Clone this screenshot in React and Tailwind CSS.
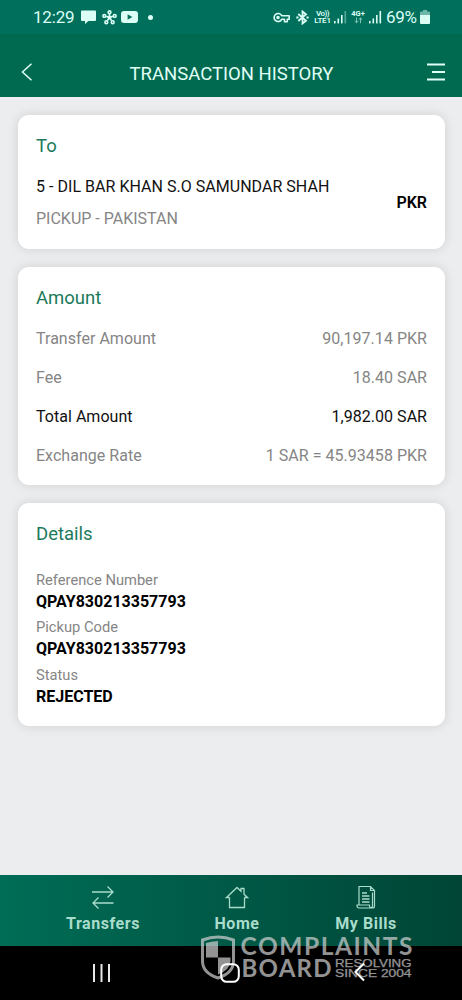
import React from "react";

const amountRows = [
  { label: "Transfer Amount", value: "90,197.14 PKR" },
  { label: "Fee", value: "18.40 SAR" },
  { label: "Total Amount", value: "1,982.00 SAR", strong: true },
  { label: "Exchange Rate", value: "1 SAR = 45.93458 PKR" },
];

const details = [
  { label: "Reference Number", value: "QPAY830213357793" },
  { label: "Pickup Code", value: "QPAY830213357793" },
  { label: "Status", value: "REJECTED" },
];

const SignalBars = ({ faded }) => (
  <svg width="13" height="14" viewBox="0 0 13 14" fill="currentColor">
    <rect x="0" y="11" width="1.6" height="2.4" />
    <rect x="3.5" y="8.5" width="1.6" height="4.9" />
    <rect x="7" y="5" width="1.6" height="8.4" />
    <rect x="10.5" y="1" width="1.6" height="12.4" opacity={faded ? 0.4 : 1} />
  </svg>
);

const StatusBar = () => (
  <div className="flex h-[34px] items-center justify-between bg-[#00705d] pl-[33px] pr-[32px] text-[#dcfff5]">
    <div className="flex items-center">
      <span className="w-[42px] whitespace-nowrap text-[17px] leading-none tracking-[-0.2px]">12:29</span>
      {/* Message */}
      <svg className="ml-[6px]" width="15" height="14" viewBox="0 0 15 14" fill="currentColor">
        <path d="M1 .5h13a1 1 0 0 1 1 1V10a1 1 0 0 1-1 1H7.5L4 14v-3H1a1 1 0 0 1-1-1V1.500a1 1 0 0 1 1-1z" />
      </svg>
      {/* Hub */}
      <svg className="ml-[6px]" width="15" height="15" viewBox="0 0 15 15" fill="none" stroke="currentColor" strokeWidth="1.6">
        <path d="M7.500 7.500V4M7.500 7.500 4 6.300M7.500 7.500 11 6.300M7.500 7.500 5.400 10.600M7.500 7.500 9.600 10.600" />
        <circle cx="7.500" cy="2.300" r="1.400" />
        <circle cx="2.300" cy="5.900" r="1.400" />
        <circle cx="12.700" cy="5.900" r="1.400" />
        <circle cx="4.300" cy="12.200" r="1.400" />
        <circle cx="10.700" cy="12.200" r="1.400" />
        <circle cx="7.500" cy="7.500" r="1.200" fill="currentColor" />
      </svg>
      {/* Video */}
      <svg className="ml-[4px]" width="17" height="12" viewBox="0 0 17 12">
        <rect width="17" height="12" rx="3" fill="currentColor" />
        <path d="M6.600 3.200v5.600L11.400 6z" fill="#00705d" />
      </svg>
      <span className="ml-[10px] size-[5px] rounded-full bg-current" />
    </div>
    <div className="flex items-center">
      {/* VPN key */}
      <svg width="17" height="11" viewBox="0 0 17 11" fill="none" stroke="currentColor" strokeWidth="1.600">
        <path d="M8.700 3.700A4 4 0 1 0 8.700 7.300H11.500V9.700H14.300V7.300H16.200V3.700z" strokeLinejoin="round" />
        <circle cx="5" cy="5.500" r="1" />
      </svg>
      {/* Bluetooth */}
      <svg className="ml-[6px]" width="13" height="15" viewBox="0 0 13 15" fill="none" stroke="currentColor" strokeWidth="1.800">
        <path d="M2.300 4 10 10.700 6.500 13.500V1.500L10 4.300 2.300 11" />
        <path d="M.3 7.500h2.200M10.500 7.500h2.200" strokeWidth="2" />
      </svg>
      <span className="ml-[5px] flex w-[17px] flex-col items-center whitespace-nowrap text-[8px] font-semibold leading-[7px]">
        <span className="tracking-[-0.5px]">Vo))</span>
        <span className="tracking-[-0.2px]">LTE1</span>
      </span>
      <span className="ml-[3px]">
        <SignalBars faded />
      </span>
      <span className="ml-[4px] flex w-[14px] flex-col items-center whitespace-nowrap text-[7.5px] font-bold leading-[7px]">
        <span>4G+</span>
        <svg width="9" height="7" viewBox="0 0 9 7" fill="none" stroke="currentColor" strokeWidth="1" opacity=".6">
          <path d="M2.500 .5v5M.7 4l1.800 1.800L4.300 4M6.500 6.200V1M4.700 2.700 6.500 1l1.800 1.700" />
        </svg>
      </span>
      <span className="ml-[4px]">
        <SignalBars />
      </span>
      <span className="ml-[4px] w-[32px] whitespace-nowrap text-[17px] leading-none tracking-[-0.3px]">69%</span>
      <svg className="ml-[2px]" width="10" height="14" viewBox="0 0 10 14" fill="currentColor">
        <path d="M3 0h4v1.500h2a1 1 0 0 1 1 1V5H0V2.500a1 1 0 0 1 1-1h2z" opacity=".5" />
        <path d="M0 5h10v8a1 1 0 0 1-1 1H1a1 1 0 0 1-1-1z" />
      </svg>
    </div>
  </div>
);

const Header = () => (
  <header className="flex h-[63px] items-center justify-between bg-[#006a51] pl-[21px] pr-[17px] pt-[12px] text-[#e0fff5]">
    <svg width="12" height="18" viewBox="0 0 12 18" fill="none" stroke="currentColor" strokeWidth="1.500">
      <path d="M10.500 .7 1.500 9l9 8.300" />
    </svg>
    <h1 className="ml-[3px] whitespace-nowrap pt-[4px] text-[18.5px] leading-6">TRANSACTION HISTORY</h1>
    <svg width="18" height="18" viewBox="0 0 18 18" fill="none" stroke="currentColor" strokeWidth="2">
      <path d="M0 1.500h18M5 9h13M0 16.500h18" />
    </svg>
  </header>
);

const Card = ({ className, title, children }) => (
  <section className={`rounded-[11px] bg-white px-[18px] shadow-[0_0_12px_rgba(0,0,0,0.12)] ${className}`}>
    <h2 className="pt-[19px] text-[18.5px] leading-6 text-[#1b7a5b]">{title}</h2>
    {children}
  </section>
);

const BottomNav = () => (
  <nav className="flex h-[71px] bg-linear-to-r from-[#006d56] to-[#004536] pl-[39px] pr-[33px] text-[16px] font-bold leading-5 tracking-[0.55px] text-[#a9dccb]">
    <div className="flex w-[128px] flex-col items-center pt-[10px]">
      <svg width="22" height="24" viewBox="0 0 22 24" fill="none" stroke="currentColor" strokeWidth="1.300">
        <path d="M0 7h21M15.500 1.500 21 7l-5.500 5.500M21.500 18H1M6.500 12.500 1 18l5.500 5.500" />
      </svg>
      <span className="mt-[5px]">Transfers</span>
    </div>
    <div className="flex w-[140px] flex-col items-center pt-[10px]">
      <svg width="24" height="24" viewBox="0 0 24 24" fill="none" stroke="currentColor" strokeWidth="1.300">
        <path d="M4.500 12.500V22.500H19.500V12.500M4.500 12.500H1.500L12 2.500l4 3.800V3.500h3v5.700l3.500 3.300H19.500" />
      </svg>
      <span className="mt-[5px]">Home</span>
    </div>
    <div className="flex w-[118px] flex-col items-center pt-[10px]">
      <svg width="20" height="24" viewBox="0 0 20 24" fill="none" stroke="currentColor" strokeWidth="1.200">
        <path d="M3 20V1.500h11.500l4 4V21a2 2 0 0 1-2 2H3a2 2 0 0 1-2-2v-1h12.500v1a1.500 1.500 0 0 0 3 0V7.500M14.500 1.500v4h4" />
        <path d="M6 8h5M6 11h7.500M6 14h7.500M6 17h7.500" strokeWidth="1.300" />
      </svg>
      <span className="mt-[5px]">My Bills</span>
    </div>
  </nav>
);

const Watermark = () => (
  <div className="absolute left-[200px] top-[-11px] font-[Lato,sans-serif] opacity-70">
    <svg
      className="overflow-visible"
      width="214"
      height="46"
      viewBox="0 0 214 46"
      fill="#d2d2d2"
    >
      <path
        d="M2.500 5Q18 -1 33.500 5V26Q33.500 38 18 43Q2.500 38 2.500 26z"
        fill="none"
        stroke="#d2d2d2"
        strokeWidth="3"
      />
      <path d="M6 8Q11 6.500 18 6V22.500H6zM18 22.500H30.500V26Q30 35 18 39.500z" />
      <text x="40.500" y="19.500" fontSize="24.500" fontWeight="700" textLength="172">COMPLAINTS</text>
      <text x="41.500" y="41.500" fontSize="24" fontWeight="700" textLength="90">BOARD</text>
      <g fontFamily="Liberation Sans, sans-serif" fontSize="10" stroke="#d2d2d2" strokeWidth=".25">
        <text x="135" y="32" textLength="76.500" lengthAdjust="spacingAndGlyphs">RESOLVING</text>
        <text x="135" y="42" textLength="76.500" lengthAdjust="spacingAndGlyphs">SINCE 2004</text>
      </g>
    </svg>
  </div>
);

const SystemNav = () => (
  <div className="relative flex h-[54px] bg-black pl-[92px] pt-[17px] text-white">
    <svg className="mt-px" width="19" height="18" viewBox="0 0 19 18" fill="none" stroke="#e8e8e8" strokeWidth="2">
      <path d="M2 0v18M9.500 0v18M17 0v18" />
    </svg>
    <svg className="z-10 ml-[109px]" width="20" height="20" viewBox="0 0 20 20" fill="none" stroke="currentColor" strokeWidth="2">
      <rect x="1.200" y="1.200" width="17.600" height="17.600" rx="5.500" />
    </svg>
    <svg className="z-10 ml-[114px] -mt-px" width="11" height="20" viewBox="0 0 11 20" fill="none" stroke="currentColor" strokeWidth="2">
      <path d="M10 1.500 1.500 10 10 18.500" />
    </svg>
    <Watermark />
  </div>
);

export default function App() {
  return (
    <div className="flex h-[1000px] w-[462px] flex-col overflow-hidden bg-[#ebedef] font-[Roboto,sans-serif]">
      <StatusBar />
      <Header />

      <main className="flex flex-1 flex-col gap-[18px] pl-[18px] pr-[17px] pt-[17.5px]">
        <Card title="To" className="h-[134px]">
          <div className="mt-[13px] flex items-center justify-between text-[16px]">
            <div>
              <p className="leading-[32px] tracking-[0.03px] text-[#111]">5 - DIL BAR KHAN S.O SAMUNDAR SHAH</p>
              <p className="leading-[32px] text-[#858585]">PICKUP - PAKISTAN</p>
            </div>
            <span className="font-semibold text-black">PKR</span>
          </div>
        </Card>

        <Card title="Amount" className="h-[218px]">
          <div className="mt-[9px] text-[16px] leading-[39px] tracking-[0.03px]">
            {amountRows.map((row) => (
              <div
                key={row.label}
                className={`flex justify-between ${row.strong ? "text-[#111]" : "text-[#858585]"}`}
              >
                <span>{row.label}</span>
                <span>{row.value}</span>
              </div>
            ))}
          </div>
        </Card>

        <Card title="Details" className="h-[223.5px]">
          <dl className="mt-[24px]">
            {details.map((item) => (
              <div key={item.label} className="h-[47.6px]">
                <dt className="text-[14.7px] leading-[20px] text-[#858585]">{item.label}</dt>
                <dd className="text-[16px] font-bold leading-[24px] text-black">{item.value}</dd>
              </div>
            ))}
          </dl>
        </Card>
      </main>

      <BottomNav />
      <SystemNav />
    </div>
  );
}
